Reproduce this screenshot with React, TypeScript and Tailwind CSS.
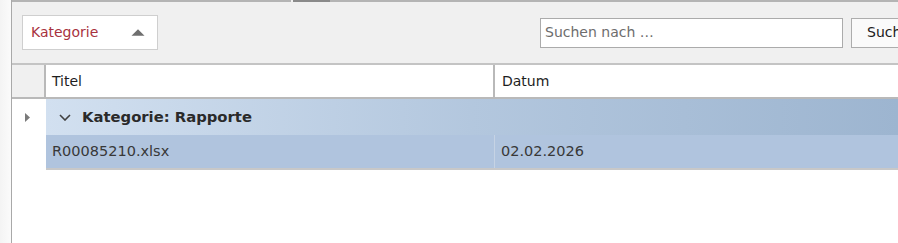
export default function App() {
  const font = { fontFamily: '"DejaVu Sans", Verdana, sans-serif' };
  return (
    <div className="flex h-[243px] w-[898px] overflow-hidden bg-white text-[14px]" style={font}>
      {/* left strip */}
      <div className="w-[12px] shrink-0 border-r border-[#a9a9a9] bg-gradient-to-r from-[#f4f4f4] to-[#fbfbfb]" />

      <div className="flex min-w-0 flex-1 flex-col overflow-hidden">
        {/* top edge */}
        <div className="flex h-[2px] shrink-0">
          <div className="w-[279px] bg-[#b4b4b4]" />
          <div className="w-[2px] bg-[#f0f0f0]" />
          <div className="w-[37px] bg-[#8a8a8a]" />
          <div className="flex-1 bg-[#b4b4b4]" />
        </div>

        {/* toolbar */}
        <div className="flex h-[63px] shrink-0 items-center border-b-2 border-[#c4c4c4] bg-[#f0f0f0] pl-[10px]">
          <button className="flex h-[35px] w-[136px] shrink-0 items-center justify-between border border-[#cfcfcf] bg-white pl-[8px] pr-[12px] text-[#a8323e]">
            <span>Kategorie</span>
            <svg width="14" height="7" viewBox="0 0 14 7">
              <path d="M0.5 6.8 L7 0.3 L13.5 6.8 Z" fill="#6f6f6f" />
            </svg>
          </button>
          <div className="ml-[382px] flex h-[30px] w-[303px] shrink-0 items-center border border-[#ababab] bg-white pl-[4px] text-[#6d6d6d]">
            Suchen nach …
          </div>
          <button className="ml-[8px] flex h-[30px] w-[80px] shrink-0 items-center border border-[#adadad] bg-[#fafafa] pl-[15px] text-[#202020]">
            Suchen
          </button>
        </div>

        {/* header */}
        <div className="flex h-[34px] shrink-0 border-b-2 border-[#b9b9b9]">
          <div className="w-[34px] shrink-0 border-r-2 border-[#b9b9b9] bg-[#f0f0f0]" />
          <div className="flex w-[449px] shrink-0 items-center border-r-2 border-[#b9b9b9] bg-white pl-[6px] text-[#1e1e1e]">
            Titel
          </div>
          <div className="flex flex-1 items-center bg-white pl-[7px] text-[#1e1e1e]">Datum</div>
        </div>

        {/* group row */}
        <div className="flex h-[36px] shrink-0">
          <div className="flex w-[34px] shrink-0 items-center justify-center bg-white pr-[4px]">
            <svg width="5" height="9" viewBox="0 0 5 9">
              <path d="M0 0 L5 4.5 L0 9 Z" fill="#7a7a7a" />
            </svg>
          </div>
          <div className="flex flex-1 items-center bg-gradient-to-r from-[#d2e0f0] via-[#b3c7de] to-[#9db5d0] pl-[13px] text-[14.8px] font-bold text-[#2a2a2a]">
            <svg width="12" height="7" viewBox="0 0 12 7" className="mr-[11px]">
              <path d="M1 1 L6 6 L11 1" fill="none" stroke="#404040" strokeWidth="1.6" />
            </svg>
            Kategorie: Rapporte
          </div>
        </div>

        {/* data row */}
        <div className="flex h-[35px] shrink-0">
          <div className="w-[34px] shrink-0 bg-white" />
          <div className="flex flex-1 border-b-2 border-[#c8c8c8] bg-[#b0c4de] text-[14.5px] text-[#383838]">
            <div className="flex w-[449px] shrink-0 items-center border-r border-[#c6d3e4] pl-[6px]">
              R00085210.xlsx
            </div>
            <div className="flex flex-1 items-center pl-[6px]">02.02.2026</div>
          </div>
        </div>

        <div className="flex-1 bg-white" />
      </div>
    </div>
  );
}
